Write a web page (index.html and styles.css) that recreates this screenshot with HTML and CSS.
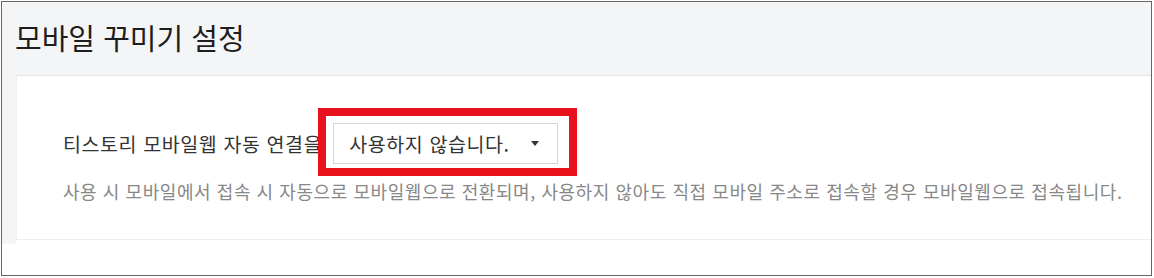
FILE: index.html
```html
<!DOCTYPE html>
<html lang="ko">
<head>
<meta charset="utf-8">
<title>모바일 꾸미기 설정</title>
<link rel="stylesheet" href="styles.css">
</head>
<body>
<div class="frame">
  <div class="header">
    <h2 class="title">모바일 꾸미기 설정</h2>
  </div>
  <div class="main">
    <div class="strip"></div>
    <div class="content">
      <div class="panel">
        <div class="row">
          <span class="label">티스토리 모바일웹 자동 연결을</span>
          <div class="select-wrap">
            <div class="select">
              <span class="select-text">사용하지 않습니다.</span>
              <span class="caret"></span>
            </div>
            <div class="highlight"></div>
          </div>
        </div>
        <p class="desc">사용 시 모바일에서 접속 시 자동으로 모바일웹으로 전환되며, 사용하지 않아도 직접 모바일 주소로 접속할 경우 모바일웹으로 접속됩니다.</p>
      </div>
    </div>
  </div>
</div>
</body>
</html>
```

FILE: styles.css
```css
* { box-sizing: border-box; }
html, body { margin: 0; padding: 0; background: #fff; }
body {
  padding: 1px 0 0 1px;
  font-family: "Noto Sans CJK KR", "Noto Sans", sans-serif;
}
.frame {
  width: 1151px;
  height: 275px;
  border: 1px solid #666;
  background: #fff;
  display: flex;
  flex-direction: column;
}
.header {
  height: 73px;
  background: #f4f5f7;
  display: flex;
  align-items: center;
  padding-left: 13px;
}
.title {
  margin: 0;
  font-size: 29px;
  font-weight: 400;
  color: #1e1e1e;
  line-height: 1;
  padding-bottom: 2px;
}
.main {
  display: flex;
  height: 169px;
}
.strip {
  width: 14px;
  background: #f4f5f7;
}
.content { flex: 1; }
.panel {
  height: 165px;
  border-top: 1px solid #e3e5e8;
  border-bottom: 1px solid #eceef0;
  border-left: 1px solid #eef0f2;
  background: #fff;
  padding: 47px 0 0 46px;
}
.row {
  display: flex;
  align-items: center;
  gap: 11px;
}
.label {
  font-size: 19.5px;
  letter-spacing: 0.6px;
  color: #333;
  line-height: 41px;
}
.select-wrap { position: relative; }
.select {
  width: 225px;
  height: 41px;
  border: 1px solid #d4d6da;
  background: #fff;
  display: flex;
  align-items: center;
  justify-content: space-between;
  padding: 0 18px 0 15px;
}
.select-text {
  font-size: 19.5px;
  letter-spacing: 0.6px;
  color: #333;
}
.caret {
  width: 0;
  height: 0;
  border-left: 4px solid transparent;
  border-right: 4px solid transparent;
  border-top: 5px solid #333;
}
.highlight {
  position: absolute;
  left: -15px;
  top: -15px;
  right: -19px;
  bottom: -12px;
  border: 8px solid #e8121d;
  pointer-events: none;
}
.desc {
  margin: 13px 0 0;
  font-size: 18px;
  letter-spacing: 0.56px;
  line-height: 28px;
  color: #888;
}
```
